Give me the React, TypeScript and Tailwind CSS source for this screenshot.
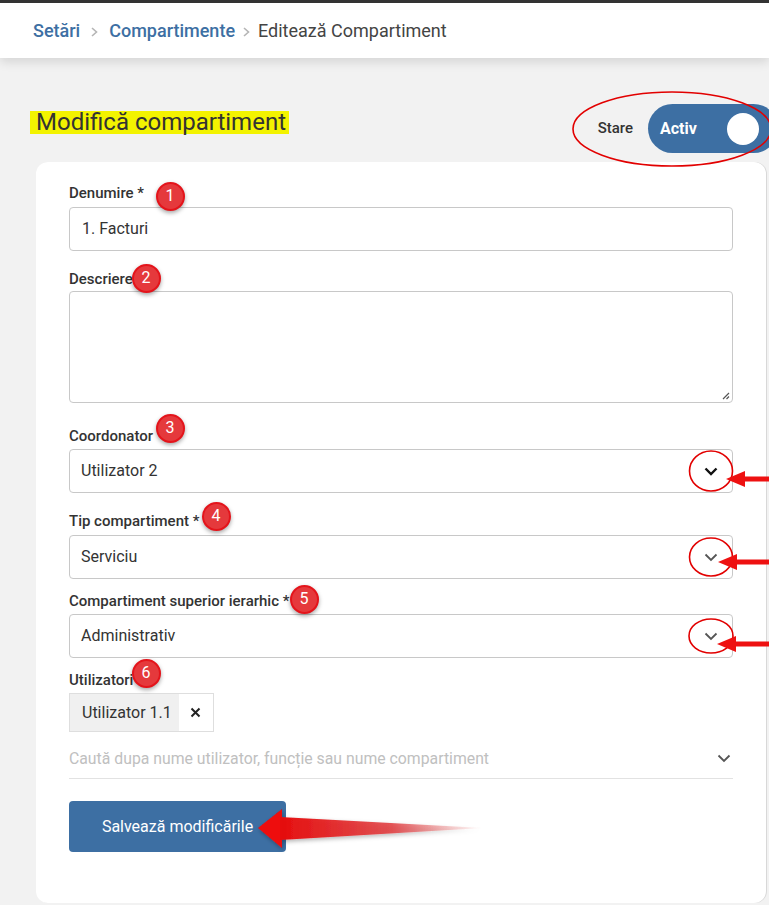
import { ReactNode } from 'react'

const font = { fontFamily: 'Roboto, "Noto Sans", sans-serif' }

function Crumb({ className }: { className: string }) {
  return (
    <svg width="9" height="12" viewBox="0 0 9 12" className={`mt-[2px] ${className}`}>
      <path d="M2 2 L6.5 6 L2 10" fill="none" stroke="#b5b5b5" strokeWidth="1.6" />
    </svg>
  )
}

function Chevron({ dark }: { dark?: boolean }) {
  return (
    <svg width="14" height="9" viewBox="0 0 14 9">
      <path
        d="M1.5 1.5 L7 7 L12.5 1.5"
        fill="none"
        stroke={dark ? '#111' : '#555'}
        strokeWidth={dark ? 2.4 : 1.8}
      />
    </svg>
  )
}

function Label({ children, className }: { children: ReactNode; className?: string }) {
  return <div className={`text-[15px] leading-5 font-medium text-[#333] ${className ?? ''}`}>{children}</div>
}

function Select({ value, dark }: { value: string; dark?: boolean }) {
  return (
    <div className="flex h-[44px] items-center justify-between rounded-[4px] border border-[#c8c8c8] bg-white pl-[11px] pr-[14px] text-[16px] text-[#333]">
      <span>{value}</span>
      <Chevron dark={dark} />
    </div>
  )
}

function Badge({ n, x, y }: { n: number; x: number; y: number }) {
  return (
    <div
      className="absolute flex h-[29px] w-[29px] items-center justify-center rounded-full border-2 border-[#e4141b] bg-[#e5393c] text-[16px] text-white shadow-[0_2px_4px_rgba(0,0,0,0.35)]"
      style={{ left: x - 14.5, top: y - 14.5 }}
    >
      {n}
    </div>
  )
}

function SideArrow({ tipX, y }: { tipX: number; y: number }) {
  return (
    <g>
      <polygon points={`${tipX},${y} ${tipX + 19},${y - 8} ${tipX + 19},${y + 8}`} fill="#ee1111" />
      <rect x={tipX + 15} y={y - 2.5} width={769 - tipX - 15} height="5" fill="#ee1111" />
    </g>
  )
}

export default function App() {
  return (
    <div className="relative h-[905px] w-[769px] overflow-hidden bg-[#f2f2f2]" style={font}>
      <header className="relative z-10 h-[58px] border-t-[3px] border-[#333] bg-white shadow-[0_4px_10px_rgba(0,0,0,0.12)]">
        <nav className="flex h-full items-center pl-[33px] text-[18px]">
          <span className="font-medium text-[#3d6fa3]">Setări</span>
          <Crumb className="mx-[10px]" />
          <span className="font-medium text-[#3d6fa3]">Compartimente</span>
          <Crumb className="mx-[7px]" />
          <span className="text-[#444]">Editează Compartiment</span>
        </nav>
      </header>

      <main className="pl-[30px] pt-[46px]">
        <div className="flex items-start">
          <h1 className="mt-[7px] bg-[#f3f300] pl-[6px] pr-[3px] text-[24px] leading-[23px] text-[#333]">
            Modifică compartiment
          </h1>
          <div className="ml-auto mr-[-9px] flex items-center">
            <span className="mr-[15px] text-[15px] font-medium text-[#333]">Stare</span>
            <div className="flex h-[49px] w-[130px] items-center rounded-full bg-[#3d6fa3] pl-[12px] pr-[19px]">
              <span className="text-[16px] font-bold text-white">Activ</span>
              <span className="ml-auto h-[32px] w-[32px] rounded-full bg-white" />
            </div>
          </div>
        </div>

        <div className="ml-[6px] mt-[9px] w-[730px] rounded-[12px] bg-white px-[33px] pb-[51px] pt-[21px] shadow-[1px_0_0_#d8d8d8]">
          <Label className="mb-[4px]">Denumire *</Label>
          <div className="flex h-[44px] items-center rounded-[4px] border border-[#c8c8c8] pl-[12px] text-[16px] text-[#333]">
            1. Facturi
          </div>

          <Label className="mb-[2px] mt-[18px]">Descriere</Label>
          <div className="relative h-[112px] rounded-[4px] border border-[#c8c8c8]">
            <svg width="9" height="9" viewBox="0 0 9 9" className="absolute bottom-[2px] right-[2px]">
              <path d="M8 2 L2 8 M8 5.5 L5.5 8" stroke="#555" strokeWidth="1.2" />
            </svg>
          </div>

          <Label className="mb-[3px] mt-[23px]">Coordonator</Label>
          <Select value="Utilizator 2" dark />

          <Label className="mb-[4px] mt-[18px]">Tip compartiment *</Label>
          <Select value="Serviciu" />

          <Label className="mb-[3px] mt-[12px]">Compartiment superior ierarhic *</Label>
          <Select value="Administrativ" />

          <Label className="mb-[3px] mt-[12px]">Utilizatori</Label>
          <div className="flex h-[39px] w-[145px] border border-[#dedede] text-[16px] text-[#333]">
            <span className="flex items-center bg-[#f0f0f0] pl-[12px] pr-[7px]">Utilizator 1.1</span>
            <span className="flex flex-1 items-center justify-center">
              <svg width="11" height="11" viewBox="0 0 11 11">
                <path d="M1.5 1.5 L9.5 9.5 M9.5 1.5 L1.5 9.5" stroke="#222" strokeWidth="2" />
              </svg>
            </span>
          </div>
          <div className="mt-[15px] flex h-[32px] items-center justify-between border-b border-[#e2e2e2] pb-[8px] pr-[2px]">
            <span className="text-[15.8px] text-[#c0c0c0]">Caută dupa nume utilizator, funcție sau nume compartiment</span>
            <Chevron />
          </div>

          <button className="mt-[22px] h-[51px] w-[217px] rounded-[4px] bg-[#3d6fa3] text-[16px] text-white">
            Salvează modificările
          </button>
        </div>
      </main>

      <svg width="769" height="905" className="pointer-events-none absolute left-0 top-0">
        <defs>
          <linearGradient id="tail" x1="0" x2="1" y1="0" y2="0">
            <stop offset="0" stopColor="#e50d0d" />
            <stop offset="0.55" stopColor="#e0393c" stopOpacity="0.85" />
            <stop offset="1" stopColor="#e06060" stopOpacity="0" />
          </linearGradient>
          <filter id="sh" x="-10%" y="-30%" width="130%" height="160%">
            <feDropShadow dx="1" dy="2" stdDeviation="2" floodOpacity="0.3" />
          </filter>
        </defs>
        <ellipse cx="672" cy="129" rx="99" ry="37" fill="none" stroke="#e20000" strokeWidth="1.6" />
        <ellipse cx="711" cy="471" rx="21.5" ry="20" fill="none" stroke="#e20000" strokeWidth="1.6" />
        <ellipse cx="711" cy="557" rx="21.5" ry="19" fill="none" stroke="#e20000" strokeWidth="1.6" />
        <ellipse cx="711" cy="636" rx="22" ry="17" fill="none" stroke="#e20000" strokeWidth="1.6" />
        <SideArrow tipX={726} y={479} />
        <SideArrow tipX={718} y={562} />
        <SideArrow tipX={717} y={644} />
        <g filter="url(#sh)">
          <polygon points="258,828 282,809 282,848" fill="#ee0a0a" />
          <polygon points="280,817 483,828 280,840" fill="url(#tail)" />
        </g>
      </svg>

      <Badge n={1} x={170} y={196} />
      <Badge n={2} x={146} y={278} />
      <Badge n={3} x={170} y={428} />
      <Badge n={4} x={216} y={516} />
      <Badge n={5} x={304} y={599} />
      <Badge n={6} x={146} y={673} />
    </div>
  )
}
